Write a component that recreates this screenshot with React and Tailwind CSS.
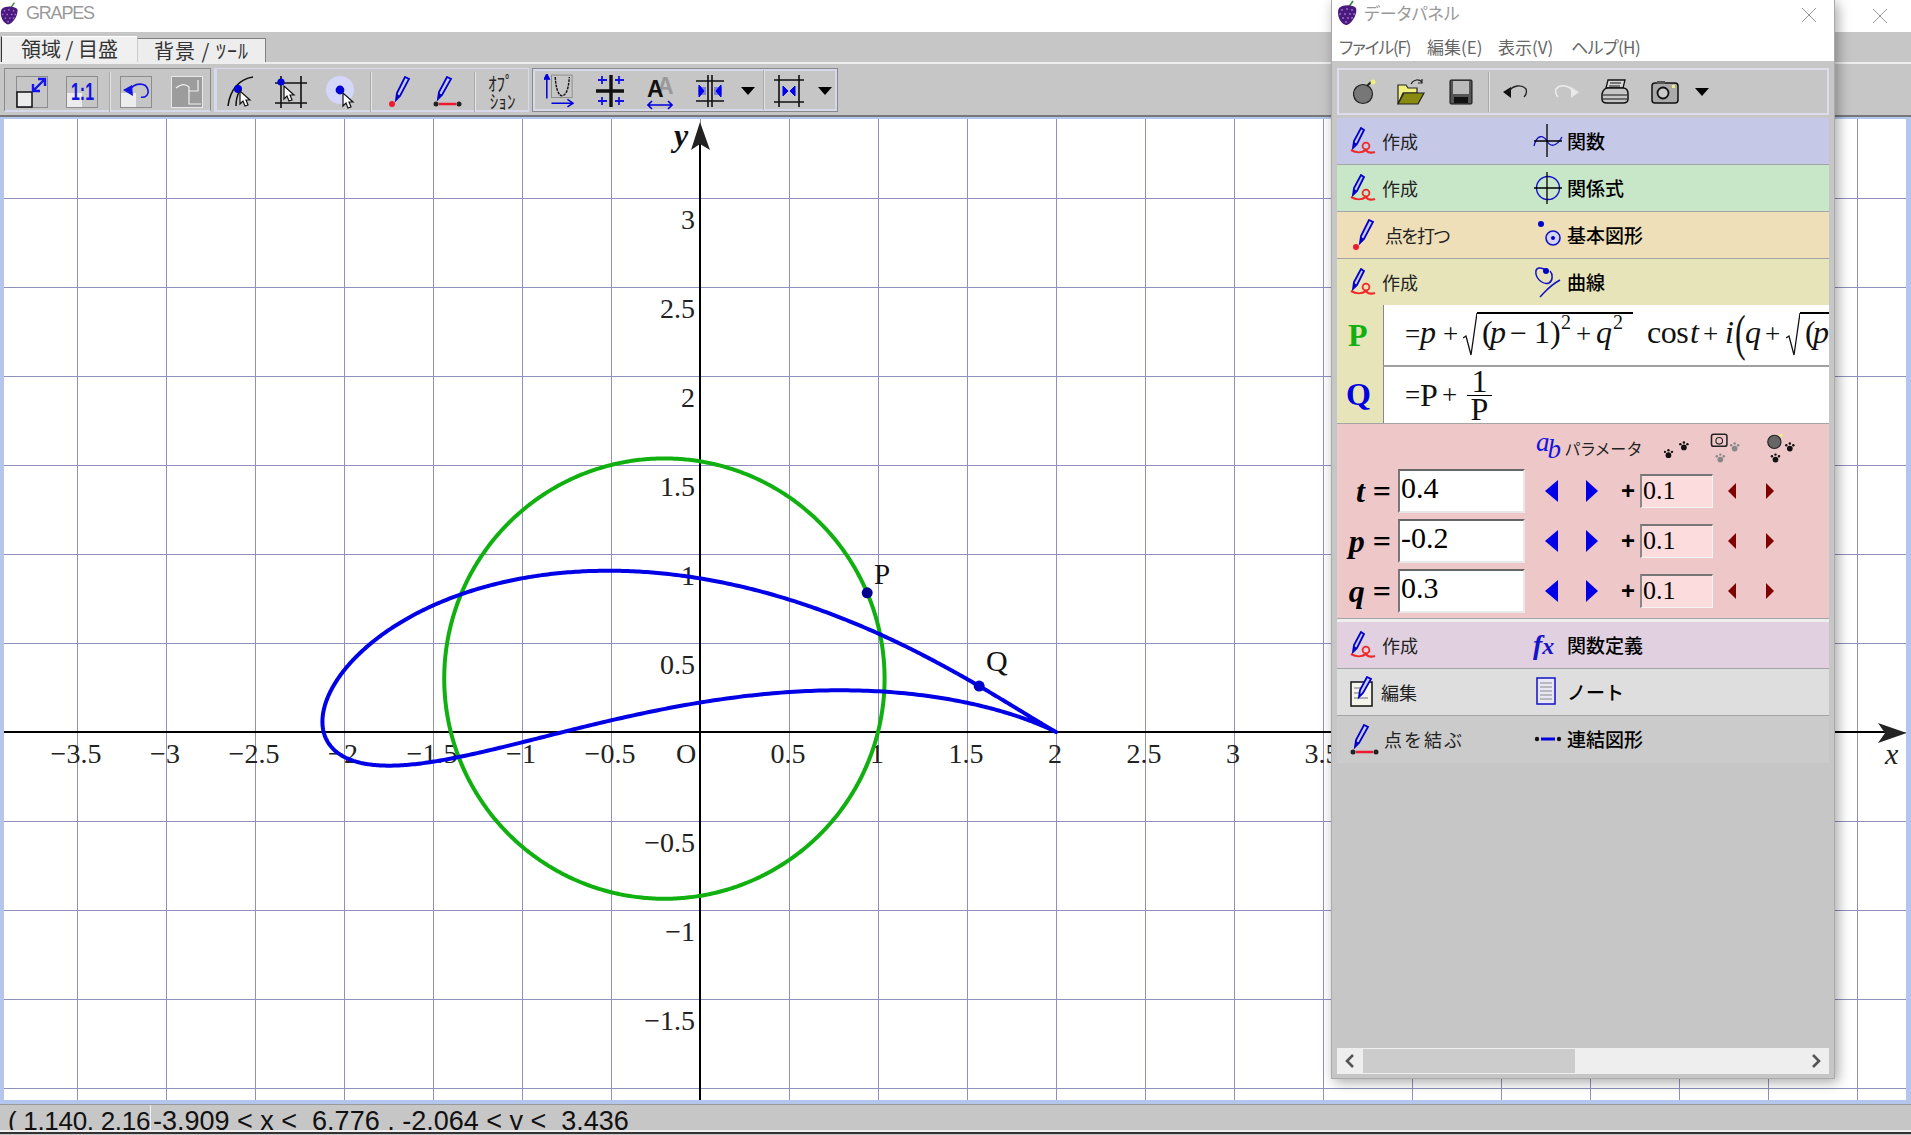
import React from "react";

// curve data: circle P and its Joukowski image Q = P + 1/P
const p0 = -0.2;
const q0 = 0.3;
const r0 = Math.sqrt((p0 - 1) ** 2 + q0 ** 2);
const sx = (x) => 700 + 178 * x;
const sy = (y) => 732 - 178 * y;

function pointP(t) {
    return [p0 + r0 * Math.cos(t), q0 + r0 * Math.sin(t)];
}
function pointQ(t) {
    const [a, b] = pointP(t);
    const d = a * a + b * b;
    return [a + a / d, b - b / d];
}
function buildPath(fn) {
    let d = "";
    for (let i = 0; i <= 720; i++) {
        const [x, y] = fn((i / 720) * Math.PI * 2);
        d += (i === 0 ? "M" : "L") + sx(x).toFixed(2) + " " + sy(y).toFixed(2);
    }
    return d + "Z";
}
const circlePath = buildPath(pointP);
const wingPath = buildPath(pointQ);
const dotP = pointP(0.4);
const dotQ = pointQ(0.4);

const vLines = Array.from({ length: 21 }, (_, i) => 700 + 89 * (i - 7));
const hLines = Array.from({ length: 12 }, (_, i) => 732 + 89 * (i - 7));
const xLabels = [
    [-3.5, "−3.5"], [-3, "−3"], [-2.5, "−2.5"], [-2, "−2"], [-1.5, "−1.5"], [-1, "−1"], [-0.5, "−0.5"],
    [0.5, "0.5"], [1, "1"], [1.5, "1.5"], [2, "2"], [2.5, "2.5"], [3, "3"], [3.5, "3.5"],
];
const yLabels = [
    [3, "3"], [2.5, "2.5"], [2, "2"], [1.5, "1.5"], [1, "1"], [0.5, "0.5"],
    [-0.5, "−0.5"], [-1, "−1"], [-1.5, "−1.5"], [-2, "−2"],
];

function Graph() {
    return (
        <svg width="1902" height="981" viewBox="4 119 1902 981" className="block bg-white font-['Liberation_Serif',serif]">
            {vLines.map((x) => <line key={x} x1={x + 0.5} y1="119" x2={x + 0.5} y2="1100" stroke="#9090bc" strokeWidth="1" />)}
            {hLines.map((y) => <line key={y} x1="4" y1={y + 0.5} x2="1906" y2={y + 0.5} stroke="#9090bc" strokeWidth="1" />)}
            <line x1="4" y1="732" x2="1885" y2="732" stroke="#000" strokeWidth="2" />
            <line x1="700" y1="140" x2="700" y2="1100" stroke="#000" strokeWidth="2" />
            <path d="M700 122L710 150L700 144L691 150Z" fill="#222" />
            <path d="M1907 733L1878 723L1885 733L1878 743Z" fill="#222" />
            {xLabels.map(([v, s]) => (
                <text key={s} x={sx(v) - 1} y="763" fontSize="28" textAnchor="middle" fill="#222">{s}</text>
            ))}
            <text x="686" y="763" fontSize="28" textAnchor="middle" fill="#222">O</text>
            {yLabels.map(([v, s]) => (
                <text key={s} x="695" y={sy(v) + 31} fontSize="28" textAnchor="end" fill="#222">{s}</text>
            ))}
            <text x="674" y="146" fontSize="32" fontStyle="italic" fontWeight="700" fill="#111">y</text>
            <text x="1885" y="764" fontSize="30" fontStyle="italic" fill="#222">x</text>
            <path d={circlePath} fill="none" stroke="#10b010" strokeWidth="4" />
            <path d={wingPath} fill="none" stroke="#0000e6" strokeWidth="4" strokeLinejoin="round" />
            <circle cx={sx(dotP[0])} cy={sy(dotP[1])} r="5.5" fill="#000090" />
            <circle cx={sx(dotQ[0])} cy={sy(dotQ[1])} r="5.5" fill="#0000c8" />
            <text x="874" y="584" fontSize="29" fill="#111">P</text>
            <text x="986" y="671" fontSize="30" fill="#111">Q</text>
        </svg>
    );
}

/* ---- small icons ---- */
function Grape({ className }) {
    return (
        <svg viewBox="0 0 22 26" className={className}>
            <path d="M12 8L17 1" stroke="#2a8a2a" strokeWidth="1.5" />
            <path d="M3 8C8 4 17 5 20 8C22 14 15 25 10 25C4 24 0 14 3 8Z" fill="#4a1a7c" />
            {[[6, 10], [11, 9], [16, 10], [4, 14], [9, 14], [14, 14], [18, 14], [7, 18], [12, 18], [16, 18], [10, 22]].map(([x, y]) => (
                <circle key={x + "-" + y} cx={x} cy={y} r="1" fill="#9a6ad0" />
            ))}
        </svg>
    );
}

function CreateIcon() {
    return (
        <svg viewBox="0 0 26 28" className="w-[26px] h-[28px] shrink-0">
            <path d="M11 1L14 3L7 17L3 21L4 14Z" fill="#c8c8f0" stroke="#0000c8" strokeWidth="1.8" />
            <path d="M3 21L4 15L7 17Z" fill="#0000c8" />
            <circle cx="16" cy="19" r="3.4" fill="none" stroke="#f02828" strokeWidth="1.8" />
            <path d="M1 23C6 26 12 26 16 23C18 26 22 26 25 25" fill="none" stroke="#f02828" strokeWidth="2.2" />
        </svg>
    );
}

function DotPen() {
    return (
        <svg viewBox="0 0 26 32" className="w-[26px] h-[32px] shrink-0">
            <path d="M19 1L23 3L14 20L10 24L11 17Z" fill="#c8c8f0" stroke="#0000c8" strokeWidth="1.8" />
            <path d="M10 24L11 18L14 20Z" fill="#0000c8" />
            <circle cx="6" cy="28" r="3" fill="#f01830" />
        </svg>
    );
}

function LinkPen() {
    return (
        <svg viewBox="0 0 30 32" className="w-[30px] h-[32px] shrink-0">
            <path d="M14 1L18 3L9 19L5 23L6 16Z" fill="#c8c8f0" stroke="#0000c8" strokeWidth="1.8" />
            <path d="M5 23L6 17L9 19Z" fill="#0000c8" />
            <circle cx="3" cy="28" r="2.5" fill="#222" />
            <circle cx="26" cy="28" r="2.5" fill="#222" />
            <path d="M6 28H23" stroke="#f01830" strokeWidth="2.5" />
        </svg>
    );
}

function EditPen() {
    return (
        <svg viewBox="0 0 26 32" className="w-[26px] h-[32px] shrink-0">
            <rect x="1" y="6" width="21" height="24" fill="#f4f4ec" stroke="#111" strokeWidth="1.5" />
            <path d="M4 12H14M4 17H12M4 22H18" stroke="#999" strokeWidth="1.5" />
            <path d="M17 1L21 3L13 17L9 21L10 14Z" fill="#c8c8f0" stroke="#0000c8" strokeWidth="1.8" />
        </svg>
    );
}

function FuncIcon() {
    return (
        <svg viewBox="0 0 30 34" className="w-[30px] h-[34px]">
            <path d="M1 22C4 10 10 11 14 17C18 24 24 22 29 13" fill="none" stroke="#1010c8" strokeWidth="1.3" />
            <path d="M14 0V33M1 17H29" stroke="#000" strokeWidth="1.3" fill="none" />
        </svg>
    );
}
function RelIcon() {
    return (
        <svg viewBox="0 0 30 34" className="w-[30px] h-[34px]">
            <circle cx="15" cy="17" r="11.5" fill="none" stroke="#1010c8" strokeWidth="1.4" />
            <path d="M14 1V33M1 17H29" stroke="#000" strokeWidth="1.3" />
        </svg>
    );
}
function ShapeIcon() {
    return (
        <svg viewBox="0 0 30 34" className="w-[30px] h-[34px]">
            <circle cx="8" cy="6" r="3" fill="#0000c8" />
            <circle cx="20" cy="20" r="7" fill="#d4d4f8" stroke="#1010c8" strokeWidth="1.6" />
            <circle cx="20" cy="20" r="2" fill="#0000c8" />
        </svg>
    );
}
function CurveIcon() {
    return (
        <svg viewBox="0 0 30 34" className="w-[30px] h-[34px]">
            <path d="M13 5C6 1 2 3 3 9C4 15 11 20 16 18C20 16 20 9 17 6M7 32C13 26 16 21 27 15" fill="none" stroke="#1010c8" strokeWidth="1.5" />
            <circle cx="13" cy="6" r="3" fill="#0000c8" />
        </svg>
    );
}
function FxIcon() {
    return (
        <span className="block w-[30px] h-[34px] font-['Liberation_Serif',serif] italic font-bold text-[#1414c8] leading-[34px] whitespace-nowrap">
            <span className="text-[28px]">f</span><span className="text-[24px]">x</span>
        </span>
    );
}
function NoteIcon() {
    return (
        <svg viewBox="0 0 30 34" className="w-[30px] h-[34px]">
            <rect x="4" y="3" width="18" height="26" fill="#e8e8f4" stroke="#1010c8" strokeWidth="1.5" />
            <path d="M7 8H19M7 12H19M7 16H19M7 20H19M7 24H19" stroke="#888" strokeWidth="1.2" />
        </svg>
    );
}
function LinkIcon() {
    return (
        <svg viewBox="0 0 30 34" className="w-[30px] h-[34px]">
            <circle cx="4" cy="16" r="2.2" fill="#111" />
            <circle cx="26" cy="16" r="2.2" fill="#111" />
            <path d="M8 16H22" stroke="#0000e0" strokeWidth="3" />
        </svg>
    );
}

function Cursor({ x, y }) {
    return <path transform={`translate(${x} ${y})`} d="M0 0L0 13L3 10L5 15L8 14L6 9L10 9Z" fill="#fff" stroke="#111" strokeWidth="1.2" />;
}

function Sep() {
    return <div className="w-[2px] h-[40px] bg-[#e4e4e4] border-l border-[#aaaaaa] shrink-0" />;
}

function DropArrow() {
    return <div className="w-0 h-0 border-x-[7px] border-x-transparent border-t-[8px] border-t-black shrink-0" />;
}

function Paw({ x, y, fill = "#111" }) {
    return (
        <g transform={`translate(${x} ${y})`} fill={fill}>
            <circle cx="4" cy="6" r="2.6" />
            <circle cx="0.8" cy="3" r="1.1" />
            <circle cx="4" cy="1.5" r="1.1" />
            <circle cx="7.2" cy="3" r="1.1" />
        </g>
    );
}

/* ---- window parts ---- */
function MainToolbar() {
    return (
        <div className="flex h-[44px] mt-[4px] ml-[4px] gap-[3px]">
            <div className="w-[207px] pt-[4px] bg-[#c6c6c6] border-t border-l border-r border-[#8a8a8a] border-b-2 border-b-[#d8d8ec] flex items-center">
                <svg viewBox="0 0 32 32" className="w-[32px] h-[32px] ml-[11px] shrink-0">
                    <rect x="0.5" y="0.5" width="31" height="31" fill="none" stroke="#8c8c8c" />
                    <rect x="1" y="16" width="15" height="15" fill="#ececec" stroke="#111" strokeWidth="1.5" />
                    <path d="M17 15L29 3M17 8V15H24M22 3H29V10" fill="none" stroke="#1414f0" strokeWidth="2.4" />
                </svg>
                <svg viewBox="0 0 32 32" className="w-[32px] h-[32px] ml-[18px] shrink-0">
                    <rect x="0.5" y="0.5" width="31" height="31" fill="none" stroke="#8c8c8c" />
                    <rect x="1" y="17" width="15" height="14" fill="#ececec" />
                    <text x="5" y="24" fontSize="24" fontWeight="700" fill="#1414e0" textLength="23" lengthAdjust="spacingAndGlyphs" className="font-['Liberation_Sans',sans-serif]">1:1</text>
                </svg>
                <div className="ml-[11px]"><Sep /></div>
                <svg viewBox="0 0 32 32" className="w-[32px] h-[32px] ml-[9px] shrink-0">
                    <rect x="0.5" y="0.5" width="31" height="31" fill="none" stroke="#8c8c8c" />
                    <rect x="1" y="17" width="15" height="14" fill="#ececec" />
                    <path d="M3 14L12 9L13 20Z" fill="#1414e0" />
                    <path d="M9 15C14 6 26 6 28 14C29 20 24 22 21 21" fill="none" stroke="#1414e0" strokeWidth="1.6" />
                </svg>
                <svg viewBox="0 0 32 32" className="w-[32px] h-[32px] ml-[19px] shrink-0">
                    <rect x="0.5" y="0.5" width="31" height="31" fill="#9c9c9c" stroke="#e8e8e8" />
                    <path d="M5 12C10 8 14 7 18 11V28H30M18 15H27V4" fill="none" stroke="#efefef" strokeWidth="1.2" />
                </svg>
            </div>
            <div className="w-[315px] pt-[4px] bg-[#c6c6c6] border-t border-l border-r border-[#d8d8ec] border-l-[3px] border-b-2 flex items-center">
                <svg viewBox="0 0 30 32" className="w-[30px] h-[32px] ml-[10px] shrink-0">
                    <path d="M1 30C3 14 12 3 26 1" fill="none" stroke="#111" strokeWidth="1.5" />
                    <path d="M9 30C9 24 10 20 12 16" fill="none" stroke="#111" strokeWidth="1.5" />
                    <circle cx="11" cy="13" r="4" fill="#0000d8" />
                    <Cursor x={13} y={15} />
                </svg>
                <svg viewBox="0 0 34 32" className="w-[34px] h-[32px] ml-[18px] shrink-0">
                    <path d="M6 0V32M26 0V32M0 7H32M0 27H32" stroke="#111" strokeWidth="1.6" fill="none" />
                    <circle cx="6" cy="6" r="3.6" fill="#0000d8" />
                    <Cursor x={9} y={10} />
                </svg>
                <svg viewBox="0 0 30 34" className="w-[30px] h-[34px] ml-[17px] shrink-0">
                    <circle cx="14" cy="15" r="14" fill="#d4d6fa" />
                    <circle cx="14" cy="15" r="4.4" fill="#0000d8" />
                    <Cursor x={17} y={18} />
                </svg>
                <div className="ml-[14px]"><Sep /></div>
                <div className="ml-[14px]"><DotPen /></div>
                <div className="ml-[21px]"><LinkPen /></div>
                <div className="ml-[11px]"><Sep /></div>
                <div className="ml-[12px] w-[36px] text-[19px] leading-[18px] font-['Noto_Sans_CJK_JP',sans-serif] text-[#222] scale-x-[0.9] origin-left whitespace-nowrap">
                    <div>ｵﾌﾟ</div>
                    <div className="ml-[2px]">ｼｮﾝ</div>
                </div>
            </div>
            <div className="w-[306px] bg-[#c6c6c6] border-[3px] border-[#d8d8ec] outline outline-1 outline-[#8a8a8a] -outline-offset-1 flex items-center">
                <svg viewBox="0 0 32 36" className="w-[30px] h-[34px] ml-[9px] mt-[2px] shrink-0">
                    <rect x="8" y="1" width="22" height="24" fill="none" stroke="#8c8c8c" />
                    <path d="M12 3C13 20 17 23 19 23C22 23 26 20 27 3" fill="none" stroke="#111" strokeWidth="1.5" strokeDasharray="3 1" />
                    <path d="M3 26V1M0 6L3 0L6 6" fill="#0000e0" stroke="#0000e0" strokeWidth="1.6" />
                    <path d="M8 31H30M25 27L31 31L25 35" fill="none" stroke="#0000e0" strokeWidth="1.6" />
                </svg>
                <svg viewBox="0 0 30 32" className="w-[30px] h-[32px] ml-[22px] mt-[2px] shrink-0">
                    <path d="M15 0V32M0 16H28" stroke="#111" strokeWidth="3.4" />
                    <path d="M2 5H11M6 1V9M19 5H28M23 1V9M2 26H11M6 22V30M19 26H28M23 22V30" stroke="#1414e0" strokeWidth="1.8" />
                </svg>
                <div className="ml-[21px] relative w-[26px] h-[34px] shrink-0 font-['Liberation_Sans',sans-serif] text-[23px] font-bold leading-[26px]">
                    <span className="absolute left-[10px] top-0 text-[#999]">A</span>
                    <span className="absolute left-0 top-[3px] text-[#111]">A</span>
                    <svg viewBox="0 0 26 10" className="absolute left-0 bottom-[-3px] w-[26px] h-[10px]">
                        <path d="M1 5H25M5 1L1 5L5 9M21 1L25 5L21 9" fill="none" stroke="#0000e0" strokeWidth="1.6" />
                    </svg>
                </div>
                <svg viewBox="0 0 28 32" className="w-[28px] h-[32px] ml-[23px] mt-[2px] shrink-0">
                    <path d="M12 0V32M16 0V32M0 6H28M0 26H28" stroke="#111" strokeWidth="1.6" />
                    <path d="M8 16L3 10V22ZM20 16L25 10V22Z" fill="#0000f0" stroke="#0000f0" />
                    <path d="M2 12H10V20H2ZM18 12H26V20H18Z" fill="#0000f0" opacity="0.35" />
                </svg>
                <div className="ml-[17px] mt-[2px]"><DropArrow /></div>
                <div className="ml-[8px]"><Sep /></div>
                <svg viewBox="0 0 30 32" className="w-[30px] h-[32px] ml-[9px] mt-[2px] shrink-0">
                    <path d="M5 0V32M25 0V32M0 5H30M0 27H30" stroke="#111" strokeWidth="1.6" />
                    <path d="M14 16L9 11V21ZM16 16L21 11V21Z" fill="#0000f0" stroke="#0000f0" />
                </svg>
                <div className="ml-[14px] mt-[2px]"><DropArrow /></div>
            </div>
        </div>
    );
}

function PanelToolbar() {
    return (
        <div className="h-[47px] border-2 border-[#dcdcec] bg-[#c6c6c6] flex items-center">
            <svg viewBox="0 0 24 26" className="w-[24px] h-[26px] ml-[14px] shrink-0">
                <circle cx="10" cy="15" r="9.5" fill="#777" stroke="#222" strokeWidth="1.2" />
                <path d="M14 7L18 3" stroke="#222" strokeWidth="2" />
                <circle cx="20" cy="3" r="2.5" fill="#f0f080" />
            </svg>
            <svg viewBox="0 0 28 26" className="w-[28px] h-[26px] ml-[20px] shrink-0">
                <path d="M1 6H9L11 9H20V14H6L1 25Z" fill="#f0f080" stroke="#222" strokeWidth="1.2" />
                <path d="M1 25L7 14H27L21 25Z" fill="#8a8a10" stroke="#222" strokeWidth="1.2" />
                <path d="M14 5C17 0 22 0 25 3M25 0V4H21" fill="none" stroke="#222" strokeWidth="1.2" />
            </svg>
            <svg viewBox="0 0 24 26" className="w-[24px] h-[26px] ml-[24px] shrink-0">
                <rect x="1" y="1" width="22" height="24" rx="1" fill="#555" stroke="#111" />
                <rect x="4" y="2" width="16" height="13" fill="#bbb" />
                <rect x="5" y="18" width="14" height="6" fill="#111" />
            </svg>
            <div className="ml-[15px]"><Sep /></div>
            <svg viewBox="0 0 26 18" className="w-[26px] h-[18px] ml-[12px] shrink-0">
                <path d="M1 9L9 4L9 15Z" fill="#111" />
                <path d="M7 9C10 2 20 1 24 6C25 9 24 12 22 14" fill="none" stroke="#222" strokeWidth="1.3" />
            </svg>
            <svg viewBox="0 0 28 18" className="w-[28px] h-[18px] ml-[24px] shrink-0">
                <path d="M27 9L19 4L19 15Z" fill="#e8e8e8" />
                <path d="M21 9C18 2 8 1 4 6C3 9 4 12 6 14" fill="none" stroke="#ececec" strokeWidth="1.5" />
            </svg>
            <svg viewBox="0 0 28 26" className="w-[28px] h-[26px] ml-[21px] shrink-0">
                <path d="M7 1H24L22 9H5Z" fill="#d8d8d8" stroke="#111" strokeWidth="1.3" />
                <path d="M9 4H20M8 7H19" stroke="#111" />
                <path d="M1 15C2 11 4 9 7 9H22C25 9 27 11 27 15V20C27 23 25 24 22 24H6C3 24 1 23 1 20Z" fill="#c6c6c6" stroke="#111" strokeWidth="1.5" />
                <path d="M2 16H26M2 20H26" stroke="#111" />
            </svg>
            <svg viewBox="0 0 28 24" className="w-[28px] h-[24px] ml-[22px] shrink-0">
                <rect x="1" y="3" width="26" height="20" rx="3" fill="#aaa" stroke="#111" strokeWidth="1.5" />
                <rect x="6" y="1" width="8" height="3" fill="#555" />
                <circle cx="12" cy="13" r="5.5" fill="#ccc" stroke="#111" strokeWidth="1.8" />
                <rect x="21" y="5" width="3" height="3" fill="#f0f080" />
            </svg>
            <div className="ml-[16px]"><DropArrow /></div>
        </div>
    );
}

function Row({ bg, icon, text, textClass = "ml-[6px]", rightIcon, right }) {
    return (
        <div className={`h-[47px] shrink-0 flex items-center border-b border-b-[#a4a4a4] ${bg}`}>
            <div className="w-[196px] flex items-center pl-[13px] shrink-0">
                {icon}
                <span className={`text-[18px] text-[#222] ${textClass}`}>{text}</span>
            </div>
            <div className="w-[34px] flex items-center shrink-0">{rightIcon}</div>
            <span className="text-[19px] text-black font-medium">{right}</span>
        </div>
    );
}

function Radical() {
    return (
        <svg viewBox="0 0 14 45" className="w-[14px] h-[45px] self-start shrink-0">
            <path d="M0 26L3 24L8 43L14 1" fill="none" stroke="#111" strokeWidth="1.3" />
        </svg>
    );
}

function FormulaP() {
    return (
        <div className="flex-1 min-w-0 overflow-hidden bg-white border-l border-l-[#888] border-b-2 border-b-[#a0a0a0] pt-[7px] pl-[21px] flex items-baseline whitespace-nowrap leading-[36px] text-[32px] font-['Liberation_Serif',serif] text-[#111]">
            <span className="w-[15px] shrink-0 text-[27px]">=</span>
            <span className="w-[23px] shrink-0 italic">p</span>
            <span className="w-[20px] shrink-0 text-[27px]">+</span>
            <Radical />
            <div className="w-[156px] shrink-0 border-t-[2px] border-black flex items-baseline pl-[5px]">
                <span className="w-[8px] shrink-0">(</span>
                <span className="w-[20px] shrink-0 italic">p</span>
                <span className="w-[24px] shrink-0 text-[30px]">−</span>
                <span className="w-[16px] shrink-0">1</span>
                <span className="w-[11px] shrink-0">)</span>
                <span className="w-[15px] shrink-0 text-[20px] -translate-y-[14px]">2</span>
                <span className="w-[20px] shrink-0 text-[27px]">+</span>
                <span className="w-[17px] shrink-0 italic">q</span>
                <span className="w-[13px] shrink-0 text-[20px] -translate-y-[14px]">2</span>
            </div>
            <span className="ml-[14px] w-[43px] shrink-0 tracking-[-0.5px]">cos</span>
            <span className="w-[13px] shrink-0 italic">t</span>
            <span className="w-[22px] shrink-0 text-[27px]">+</span>
            <span className="w-[10px] shrink-0 italic">i</span>
            <span className="w-[10px] shrink-0 font-light scale-y-[1.6]">(</span>
            <span className="w-[20px] shrink-0 italic">q</span>
            <span className="w-[21px] shrink-0 text-[27px]">+</span>
            <Radical />
            <div className="w-[60px] shrink-0 border-t-[2px] border-black flex items-baseline pl-[5px]">
                <span className="w-[8px] shrink-0">(</span>
                <span className="italic">p</span>
            </div>
        </div>
    );
}

function FormulaQ() {
    return (
        <div className="flex-1 bg-white border-l border-l-[#888] pl-[21px] flex items-center text-[32px] font-['Liberation_Serif',serif] text-[#111]">
            <span className="w-[15px] shrink-0 text-[27px]">=</span>
            <span className="w-[22px] shrink-0">P</span>
            <span className="w-[25px] shrink-0 text-[27px]">+</span>
            <div className="w-[25px] flex flex-col items-center leading-[27px]">
                <span className="border-b border-black w-full text-center">1</span>
                <span>P</span>
            </div>
        </div>
    );
}

function ParamRow({ name, value }) {
    return (
        <div className="h-[44px] flex items-center shrink-0">
            <div className="w-[61px] pr-[7px] text-right font-['Liberation_Serif',serif] font-bold text-[32px] leading-[44px] whitespace-nowrap shrink-0">
                <span className="italic">{name}</span> =
            </div>
            <div className="w-[127px] h-[44px] bg-white border-t-2 border-l-2 border-t-[#666] border-l-[#777] border-b-2 border-r-2 border-b-[#e8e8e8] border-r-[#e8e8e8] pl-[1px] font-['Liberation_Serif',serif] text-[30px] leading-[34px] shrink-0">{value}</div>
            <div className="ml-[20px] w-0 h-0 border-y-[11px] border-y-transparent border-r-[13px] border-r-[#0000e6] shrink-0" />
            <div className="ml-[28px] w-0 h-0 border-y-[11px] border-y-transparent border-l-[12px] border-l-[#0000e6] shrink-0" />
            <div className="ml-[23px] w-[14px] font-['Liberation_Sans',sans-serif] font-bold text-[24px] leading-none text-black shrink-0">+</div>
            <div className="ml-[5px] w-[73px] h-[34px] bg-[#fcdcdc] border-t-2 border-l-2 border-t-[#777] border-l-[#888] border-b border-r border-b-[#f4f4f4] border-r-[#f4f4f4] pl-[1px] font-['Liberation_Serif',serif] text-[26px] leading-[30px] shrink-0">0.1</div>
            <div className="ml-[15px] w-0 h-0 border-y-[8px] border-y-transparent border-r-[8px] border-r-[#800000] shrink-0" />
            <div className="ml-[30px] w-0 h-0 border-y-[8px] border-y-transparent border-l-[8px] border-l-[#800000] shrink-0" />
        </div>
    );
}

function DataPanel() {
    return (
        <div className="absolute left-[1331px] top-0 w-[504px] h-[1079px] bg-[#c6c6c6] border-x border-b border-[#aaaaaa] shadow-[3px_3px_12px_rgba(0,0,0,0.35)] flex flex-col font-['Noto_Sans_CJK_JP',sans-serif]">
            <div className="h-[32px] bg-white flex items-center shrink-0 pl-[4px] pb-[6px]">
                <Grape className="w-[22px] h-[26px]" />
                <span className="ml-[6px] text-[17px] text-[#999] [font-feature-settings:'palt']">データパネル</span>
                <svg viewBox="0 0 16 16" className="w-[16px] h-[16px] ml-auto mr-[17px] mt-[4px]">
                    <path d="M1 1L15 15M15 1L1 15" stroke="#999" strokeWidth="1" />
                </svg>
            </div>
            <div className="h-[29px] bg-white flex items-center shrink-0 pl-[7px] text-[17px] text-[#666] whitespace-nowrap [font-feature-settings:'palt']">
                <span className="w-[88px] tracking-[-1.2px]">ファイル(F)</span>
                <span className="w-[71px]">編集(E)</span>
                <span className="w-[73px]">表示(V)</span>
                <span className="tracking-[-0.6px]">ヘルプ(H)</span>
            </div>
            <div className="flex-1 flex flex-col min-h-0 pt-[7px] px-[5px] pb-[4px]">
                <PanelToolbar />
                <div className="mt-[3px] flex flex-col">
                    <Row bg="bg-[#c6c8e8]" icon={<CreateIcon />} text="作成" rightIcon={<FuncIcon />} right="関数" />
                    <Row bg="bg-[#c8e6c8]" icon={<CreateIcon />} text="作成" rightIcon={<RelIcon />} right="関係式" />
                    <Row bg="bg-[#eedfb8]" icon={<DotPen />} text="点を打つ" textClass="ml-[9px] tracking-[-2px]" rightIcon={<ShapeIcon />} right="基本図形" />
                    <div className="h-[46px] shrink-0 flex items-center bg-[#e6e4b8]">
                        <div className="w-[196px] flex items-center pl-[13px] shrink-0">
                            <CreateIcon />
                            <span className="text-[18px] text-[#222] ml-[6px]">作成</span>
                        </div>
                        <div className="w-[34px] flex items-center shrink-0"><CurveIcon /></div>
                        <span className="text-[19px] text-black font-medium">曲線</span>
                    </div>
                    <div className="h-[62px] shrink-0 flex bg-[#e6e4b8]">
                        <div className="w-[46px] shrink-0 pl-[11px] pt-[6px] font-['Liberation_Serif',serif] font-bold text-[32px] text-[#10b010]">P</div>
                        <FormulaP />
                    </div>
                    <div className="h-[57px] shrink-0 flex bg-[#e6e4b8] border-b border-b-[#a4a4a4]">
                        <div className="w-[46px] shrink-0 pl-[9px] pt-[3px] font-['Liberation_Serif',serif] font-bold text-[32px] text-[#0000e0]">Q</div>
                        <FormulaQ />
                    </div>
                    <div className="h-[195px] shrink-0 bg-[#eec8c8] border-b border-b-[#a4a4a4] flex flex-col gap-[6px] text-black">
                        <div className="h-[39px] shrink-0 flex items-center pt-[9px] pl-[199px]">
                            <span className="w-[29px] font-['Liberation_Serif',serif] italic text-[#1414e0] text-[27px] leading-none -translate-y-[1px] whitespace-nowrap">
                                <span className="relative -top-[5px]">a</span><span className="relative top-[2px] -left-[2px]">b</span>
                            </span>
                            <span className="text-[16px] text-[#222] [font-feature-settings:'palt'] tracking-[1px]">パラメータ</span>
                            <svg viewBox="0 0 125 29" className="w-[138px] h-[32px] ml-[22px] shrink-0">
                                <Paw x={0} y={15} />
                                <Paw x={14} y={8} />
                                <rect x="43" y="2" width="14" height="11" rx="2" fill="none" stroke="#222" strokeWidth="1.4" />
                                <circle cx="50" cy="8" r="3" fill="none" stroke="#222" />
                                <Paw x={60} y={9} fill="#888" />
                                <Paw x={47} y={19} fill="#888" />
                                <circle cx="100" cy="9" r="6" fill="#666" stroke="#222" />
                                <circle cx="106" cy="3" r="1.5" fill="#f0f080" />
                                <Paw x={110} y={9} />
                                <Paw x={97} y={19} />
                            </svg>
                        </div>
                        <ParamRow name="t" value="0.4" />
                        <ParamRow name="p" value="-0.2" />
                        <ParamRow name="q" value="0.3" />
                    </div>
                    <div className="h-[3px] shrink-0 bg-[#eeeeee]" />
                    <Row bg="bg-[#e0d0e0]" icon={<CreateIcon />} text="作成" rightIcon={<FxIcon />} right="関数定義" />
                    <Row bg="bg-[#dedede]" icon={<EditPen />} text="編集" textClass="ml-[5px]" rightIcon={<NoteIcon />} right="ノート" />
                    <Row bg="bg-[#cbcbcb] !border-b-0" icon={<LinkPen />} text="点を結ぶ" textClass="ml-[4px] tracking-[2px]" rightIcon={<LinkIcon />} right="連結図形" />
                </div>
                <div className="mt-auto h-[26px] bg-[#eeeeee] flex items-center shrink-0">
                    <div className="w-[26px] flex justify-center shrink-0">
                        <svg viewBox="0 0 10 14" className="w-[10px] h-[14px]"><path d="M8 1L2 7L8 13" fill="none" stroke="#555" strokeWidth="2.6" /></svg>
                    </div>
                    <div className="w-[212px] h-[24px] bg-[#cccccc] shrink-0" />
                    <div className="ml-auto w-[26px] flex justify-center shrink-0">
                        <svg viewBox="0 0 10 14" className="w-[10px] h-[14px]"><path d="M2 1L8 7L2 13" fill="none" stroke="#555" strokeWidth="2.6" /></svg>
                    </div>
                </div>
            </div>
        </div>
    );
}

export default function App() {
    return (
        <div className="relative w-[1911px] h-[1135px] overflow-hidden bg-[#c6c6c6] font-['Noto_Sans_CJK_JP',sans-serif]">
            <div className="h-[32px] bg-white flex items-center pb-[5px]">
                <Grape className="w-[20px] h-[25px] -ml-[1px]" />
                <span className="ml-[7px] text-[18px] text-[#999] font-['Liberation_Sans',sans-serif] tracking-[-1.2px]">GRAPES</span>
                <svg viewBox="0 0 16 16" className="w-[16px] h-[16px] ml-auto mr-[23px] mt-[4px]">
                    <path d="M1 1L15 15M15 1L1 15" stroke="#999" strokeWidth="1" />
                </svg>
            </div>

            {/* tabs */}
            <div className="h-[32px] flex items-end pl-[1px] border-b-2 border-b-[#eeeeee]">
                <div className="w-[136px] h-[26px] bg-[#f0f0f0] border-t border-l border-t-white text-[20px] leading-[24px] text-[#333] text-center whitespace-pre">領域 / 目盛</div>
                <div className="w-[129px] h-[24px] bg-[#ededed] border border-b-0 border-[#808080] border-l-[#cccccc] text-[20px] leading-[23px] tracking-[1px] text-[#333] text-center whitespace-pre">背景 / ﾂｰﾙ</div>
            </div>

            <MainToolbar />

            {/* graph area */}
            <div className="mt-[3px] border-t-2 border-t-[#777777]">
                <div className="border-x-[4px] border-t-2 border-b-[4px] border-[#b4c6ec] h-[987px] border-r-[5px]">
                    <Graph />
                </div>
            </div>

            {/* status bar */}
            <div className="border-t border-t-[#999999] h-[26px] flex whitespace-pre overflow-hidden font-['Liberation_Sans',sans-serif] text-[27px] leading-[32px] text-[#111]">
                <div className="w-[151px] shrink-0 overflow-hidden pl-[8px] text-[26px] tracking-[-0.3px] border-r border-r-[#eeeeee]">( 1.140, 2.160 )</div>
                <div className="pl-[2px]">-3.909 &lt; x &lt;  6.776 , -2.064 &lt; y &lt;  3.436</div>
            </div>
            <div className="h-[2px] bg-[#eeeeee]" />
            <div className="h-[2px] bg-[#333333]" />

            <DataPanel />
        </div>
    );
}
